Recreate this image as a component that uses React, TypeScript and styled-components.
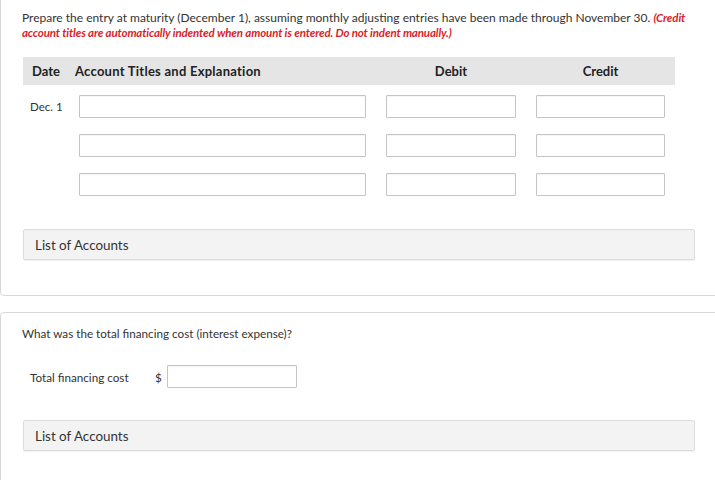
import styled, { createGlobalStyle } from "styled-components";

const GlobalStyle = createGlobalStyle`
  html, body {
    margin: 0;
    padding: 0;
    background: #fff;
    overflow: hidden;
  }
  body {
    font-family: Lato, "Open Sans", sans-serif;
    color: #333;
  }
`;

const Page = styled.div`
  width: 715px;
  height: 480px;
  overflow: hidden;
`;

const Panel = styled.section<{ $first?: boolean }>`
  box-sizing: border-box;
  margin-right: -4px;
  margin-top: ${(p) => (p.$first ? "-10px" : "16px")};
  padding: ${(p) => (p.$first ? "19px 23px 35px 22px" : "13px 23px 35px 22px")};
  border: 1px solid #d8d8d8;
  border-radius: 4px;
`;

const Instructions = styled.p`
  margin: 0 0 0 -1px;
  font-size: 12px;
  line-height: 15px;
`;

const Note = styled.em`
  color: #d71f2b;
  font-weight: 700;
  font-size: 11.5px;
  letter-spacing: -0.13px;
`;

const JournalGrid = styled.div`
  display: grid;
  grid-template-columns: 36px 287px 130px 129px;
  column-gap: 20px;
  margin-top: 17px;
`;

const HeaderRow = styled.div`
  grid-column: 1 / -1;
  display: grid;
  grid-template-columns: inherit;
  column-gap: inherit;
  height: 28px;
  align-items: center;
  background: #e5e5e5;
  margin-right: -10px;
  margin-bottom: 10px;
  font-size: 13px;
  font-weight: 700;
  color: #222;
`;

const HeadCell = styled.div<{ $align?: string; $shift?: number; $wide?: boolean }>`
  text-align: ${(p) => p.$align || "left"};
  margin-left: ${(p) => p.$shift || 0}px;
  letter-spacing: ${(p) => (p.$wide ? "0.25px" : "0")};
  white-space: nowrap;
`;

const EntryRow = styled.div`
  grid-column: 1 / -1;
  display: grid;
  grid-template-columns: inherit;
  column-gap: inherit;
  align-items: center;
  margin-bottom: 16px;
  &:last-child {
    margin-bottom: 0;
  }
`;

const DateCell = styled.div`
  font-size: 11.5px;
  padding-left: 7px;
  white-space: nowrap;
`;

const Field = styled.input<{ $width?: number }>`
  box-sizing: border-box;
  width: ${(p) => (p.$width ? `${p.$width}px` : "100%")};
  height: 23px;
  border: 1px solid #c4c4c4;
  border-radius: 1px;
  background: #fff;
  box-shadow: inset 0 1px 1px rgba(0, 0, 0, 0.04);
  padding: 0 4px;
  margin: 0;
  font: inherit;
`;

const AccountsBar = styled.div<{ $gap: number }>`
  box-sizing: border-box;
  margin-top: ${(p) => p.$gap}px;
  height: 31px;
  display: flex;
  align-items: center;
  padding-left: 11px;
  background: #f3f3f3;
  border: 1px solid #dcdcdc;
  border-radius: 2px;
  box-shadow: 0 1px 1px rgba(0, 0, 0, 0.06);
  font-size: 13.4px;
  color: #333;
`;

const Question = styled.p`
  margin: 0 0 0 -1px;
  font-size: 11.7px;
  line-height: 15px;
`;

const CostRow = styled.div`
  display: flex;
  align-items: center;
  margin-top: 24px;
  padding-left: 7px;
  font-size: 11.7px;
`;

const CostLabel = styled.span`
  width: 125px;
`;

const Dollar = styled.span`
  width: 12px;
`;

const rows = ["Dec. 1", "", ""];

export default function App() {
  return (
    <Page>
      <GlobalStyle />
      <Panel $first>
        <Instructions>
          Prepare the entry at maturity (December 1), assuming monthly adjusting entries have been
          made through November 30.{" "}
          <Note>
            (Credit account titles are automatically indented when amount is entered. Do not indent
            manually.)
          </Note>
        </Instructions>
        <JournalGrid>
          <HeaderRow>
            <HeadCell $shift={9}>Date</HeadCell>
            <HeadCell $shift={-4} $wide>
              Account Titles and Explanation
            </HeadCell>
            <HeadCell $align="center">Debit</HeadCell>
            <HeadCell $align="center">Credit</HeadCell>
          </HeaderRow>
          {rows.map((d, i) => (
            <EntryRow key={i}>
              <DateCell>{d}</DateCell>
              <Field />
              <Field />
              <Field />
            </EntryRow>
          ))}
        </JournalGrid>
        <AccountsBar $gap={33}>List of Accounts</AccountsBar>
      </Panel>
      <Panel>
        <Question>What was the total financing cost (interest expense)?</Question>
        <CostRow>
          <CostLabel>Total financing cost</CostLabel>
          <Dollar>$</Dollar>
          <Field $width={130} />
        </CostRow>
        <AccountsBar $gap={32}>List of Accounts</AccountsBar>
      </Panel>
    </Page>
  );
}
